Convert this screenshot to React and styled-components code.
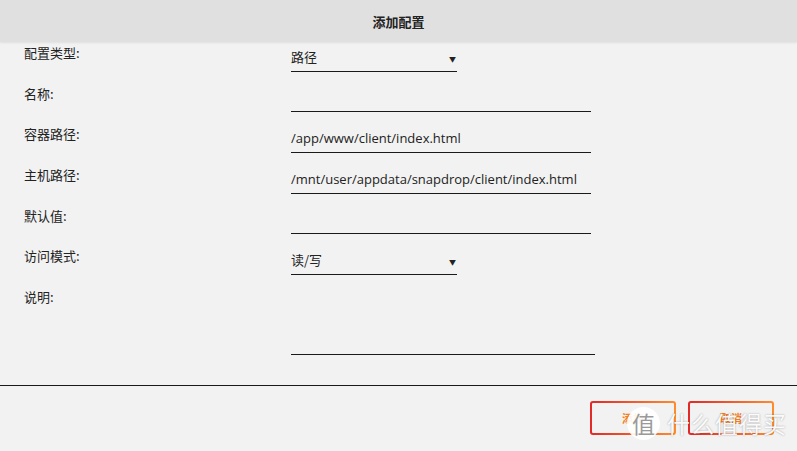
import React from 'react';
import styled, { createGlobalStyle } from 'styled-components';

const GlobalStyle = createGlobalStyle`
    html, body {
        margin: 0;
        padding: 0;
        background: #f2f2f2;
    }
    body {
        font-family: "Noto Sans", "Noto Sans CJK SC", sans-serif;
        color: #222;
    }
`;

const rows = [
    { label: '配置类型:', kind: 'select', value: '路径' },
    { label: '名称:', kind: 'input', value: '' },
    { label: '容器路径:', kind: 'input', value: '/app/www/client/index.html' },
    { label: '主机路径:', kind: 'input', value: '/mnt/user/appdata/snapdrop/client/index.html' },
    { label: '默认值:', kind: 'input', value: '' },
    { label: '访问模式:', kind: 'select', value: '读/写' },
    { label: '说明:', kind: 'textarea', value: '' },
];

const App = () => {
    return (
        <Dialog>
            <GlobalStyle />
            <Header>添加配置</Header>
            <Form>
                {rows.map((row) => (
                    <React.Fragment key={row.label}>
                        <Label>{row.label}</Label>
                        {row.kind === 'select' && (
                            <Select>
                                <span>{row.value}</span>
                                <Arrow>▼</Arrow>
                            </Select>
                        )}
                        {row.kind === 'input' && <Field>{row.value}</Field>}
                        {row.kind === 'textarea' && <TextArea />}
                    </React.Fragment>
                ))}
            </Form>
            <Footer>
                <Button>添加</Button>
                <Button>取消</Button>
                <Watermark>
                    <Badge>值</Badge>
                    <Brand>什么值得买</Brand>
                </Watermark>
            </Footer>
        </Dialog>
    );
};

const Dialog = styled.div`
    width: 797px;
    height: 451px;
    background: #f2f2f2;
    overflow: hidden;
`;

const Header = styled.div`
    height: 42px;
    display: flex;
    align-items: center;
    justify-content: center;
    background: #e0e0e0;
    box-shadow: 0 1px 2px rgba(0, 0, 0, 0.08);
    font-family: "Noto Sans CJK SC", sans-serif;
    font-size: 13px;
    font-weight: bold;
    color: #222;
`;

const Form = styled.div`
    display: grid;
    grid-template-columns: 267px 1fr;
    align-content: start;
    align-items: start;
    row-gap: 9.2px;
    margin-top: -2px;
    padding: 0 0 30px 24px;
    border-bottom: 1px solid #1a1a1a;
`;

const Label = styled.div`
    padding-top: 3px;
    line-height: 20px;
    font-family: "Noto Sans CJK SC", sans-serif;
    font-size: 13px;
    color: #222;
`;

const Field = styled.div`
    width: 300px;
    height: 31.5px;
    box-sizing: border-box;
    border-bottom: 1px solid #1a1a1a;
    padding-top: 7px;
    font-family: "Open Sans", "Noto Sans CJK SC", sans-serif;
    font-size: 13px;
    line-height: 20px;
    color: #222;
    white-space: nowrap;
`;

const Select = styled(Field)`
    width: 166px;
    display: flex;
    justify-content: space-between;
    font-family: "Noto Sans CJK SC", sans-serif;
`;

const Arrow = styled.span`
    font-size: 7px;
    line-height: 24px;
    padding-right: 1px;
    color: #222;
`;

const TextArea = styled.div`
    width: 304px;
    height: 71px;
    box-sizing: border-box;
    border-bottom: 1px solid #1a1a1a;
`;

const Footer = styled.div`
    position: relative;
    display: flex;
    justify-content: flex-end;
    gap: 12px;
    padding: 15px 23px 0 0;
`;

const Button = styled.button`
    width: 86px;
    height: 34px;
    border: 2px solid transparent;
    border-radius: 3px;
    background:
        linear-gradient(#f2f2f2, #f2f2f2) padding-box,
        linear-gradient(90deg, #e22828, #ff8c2f) border-box;
    font-family: "Noto Sans CJK SC", sans-serif;
    font-size: 11px;
    font-weight: bold;
    color: #f47c22;
    cursor: pointer;
`;

const Watermark = styled.div`
    position: absolute;
    left: 627px;
    top: 20px;
    display: flex;
    align-items: center;
    gap: 7px;
    pointer-events: none;
`;

const Badge = styled.div`
    width: 33px;
    height: 33px;
    border-radius: 50%;
    background: rgba(255, 255, 255, 0.92);
    display: flex;
    align-items: center;
    justify-content: center;
    font-family: "Noto Sans CJK SC", sans-serif;
    font-size: 23px;
    color: #9a9a9a;
`;

const Brand = styled.div`
    font-family: "Noto Sans CJK SC", sans-serif;
    font-size: 23px;
    letter-spacing: 1px;
    color: rgba(255, 255, 255, 0.95);
    text-shadow: 0 0 2px rgba(0, 0, 0, 0.35);
`;

export default App;
